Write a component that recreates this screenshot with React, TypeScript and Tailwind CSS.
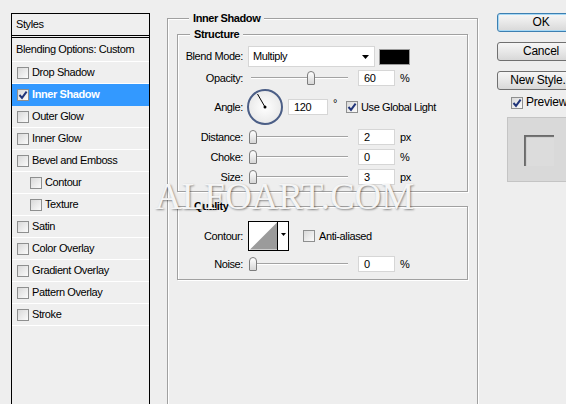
import React from "react";

type StyleRow = { label: string; checked?: boolean; active?: boolean; sub?: boolean };

const styleRows: StyleRow[] = [
  { label: "Drop Shadow" },
  { label: "Inner Shadow", checked: true, active: true },
  { label: "Outer Glow" },
  { label: "Inner Glow" },
  { label: "Bevel and Emboss" },
  { label: "Contour", sub: true },
  { label: "Texture", sub: true },
  { label: "Satin" },
  { label: "Color Overlay" },
  { label: "Gradient Overlay" },
  { label: "Pattern Overlay" },
  { label: "Stroke" },
];

const Checkbox = ({ checked }: { checked?: boolean }) => (
  <span className="flex h-[12px] w-[12px] shrink-0 items-center justify-center border border-[#8e8f8f] bg-linear-to-br from-[#d9d9d9] to-[#fbfbfb]">
    {checked && (
      <svg width="10" height="10" viewBox="0 0 10 10">
        <path d="M1.5 5 L4 7.8 L8.6 1.6" fill="none" stroke="#21357a" strokeWidth="2" />
      </svg>
    )}
  </span>
);

const Slider = ({ pos }: { pos: number }) => (
  <div className="relative h-[16px] w-[102px] shrink-0">
    <div className="absolute left-[3px] right-[2px] top-[7px] h-[2px] border-t border-b border-t-[#a3a3a3] border-b-white" />
    <div
      className="absolute top-[1px] h-[14px] w-[8px] rounded-t-[4px] rounded-b-[1px] border border-[#7d7d7d] bg-linear-to-b from-white to-[#d6d6d6]"
      style={{ left: pos }}
    />
  </div>
);

const Field = ({ value, w = "w-[37px]" }: { value: string; w?: string }) => (
  <div className={`flex h-[16px] ${w} shrink-0 items-center border border-[#d6d6d6] bg-white pl-[5px]`}>
    {value}
  </div>
);

const SliderRow = ({
  label,
  pos,
  value,
  unit,
  h = "h-[20px]",
}: {
  label: string;
  pos: number;
  value: string;
  unit: string;
  h?: string;
}) => (
  <div className={`flex ${h} items-center`}>
    <span className="w-[65px] text-right">{label}</span>
    <div className="ml-[5px]">
      <Slider pos={pos} />
    </div>
    <div className="ml-[8px]">
      <Field value={value} />
    </div>
    <span className="ml-[5px]">{unit}</span>
  </div>
);

const Legend = ({ children }: { children: React.ReactNode }) => (
  <legend className="ml-[12px] bg-[#eeeeee] px-[4px] font-bold leading-[13px]">{children}</legend>
);

const Button = ({ children, primary }: { children: React.ReactNode; primary?: boolean }) => (
  <div
    className={`flex h-[19px] w-[88px] items-center justify-center rounded-[3px] border bg-linear-to-b from-[#f6f6f6] via-[#e8e8e8] to-[#d8d8d8] text-[12px] tracking-[-0.2px] ${
      primary ? "border-[#3c7fb1] shadow-[inset_0_0_0_1px_#a6d8f5]" : "border-[#707070]"
    }`}
  >
    {children}
  </div>
);

export default function App() {
  return (
    <div className="relative flex h-[404px] w-[566px] overflow-hidden bg-[#eeeeee] font-['Liberation_Sans',Arial,sans-serif] text-[11px] leading-[13px] tracking-[-0.4px] text-black">
      {/* styles list */}
      <div className="ml-[11px] mt-[13px] flex h-[392px] w-[139px] shrink-0 flex-col border border-black bg-[#efefef]">
        <div className="flex h-[24px] items-center border-b-[3px] border-double border-black pl-[4px]">Styles</div>
        <div className="flex h-[24px] items-center border-b border-white pl-[4px]">Blending Options: Custom</div>
        {styleRows.map((r) => (
          <div
            key={r.label}
            className={`flex h-[22px] items-center border-b pl-[5px] ${
              r.active ? "border-[#3399ff] bg-[#3399ff] font-bold text-white" : "border-white"
            }`}
          >
            <span className={`flex items-center gap-[3px] ${r.sub ? "pl-[13px]" : ""}`}>
              <Checkbox checked={r.checked} />
              {r.label}
            </span>
          </div>
        ))}
      </div>

      {/* main group */}
      <fieldset className="ml-[17px] mt-[12px] h-[400px] w-[311px] shrink-0 border border-[#a0a0a0] px-[9px] shadow-[inset_1px_1px_0_#ffffff,1px_1px_0_#ffffff]">
        <Legend>Inner Shadow</Legend>

        <fieldset className="mt-[3px] border border-[#a0a0a0] pb-[4px] shadow-[inset_1px_1px_0_#ffffff,1px_1px_0_#ffffff]">
          <Legend>Structure</Legend>

          <div className="mt-[5px] flex h-[21px] items-center">
            <span className="w-[65px] text-right">Blend Mode:</span>
            <div className="ml-[5px] flex h-[21px] w-[127px] items-center justify-between border border-[#d6d6d6] bg-white pl-[4px] pr-[5px]">
              <span>Multiply</span>
              <svg width="7" height="4" viewBox="0 0 7 4">
                <path d="M0 0 H7 L3.5 4 Z" fill="#000" />
              </svg>
            </div>
            <div className="ml-[4px] h-[16px] w-[31px] border border-[#9a9a9a] bg-black" />
          </div>

          <div className="mt-[3px]">
            <SliderRow label="Opacity:" pos={59} value="60" unit="%" h="h-[16px]" />
          </div>

          <div className="mt-[3px] flex h-[36px] items-center">
            <span className="w-[65px] text-right">Angle:</span>
            <div className="ml-[4px] h-[36px] w-[36px] shrink-0 rounded-full border-2 border-[#4b5e86] bg-radial from-white to-[#e2e2e2]">
              <svg width="32" height="32" viewBox="0 0 32 32">
                <line x1="16" y1="16" x2="8.5" y2="3" stroke="#000" strokeWidth="1" />
                <circle cx="16" cy="16" r="1.5" fill="#000" />
              </svg>
            </div>
            <div className="ml-[5px]">
              <Field value="120" w="w-[40px]" />
            </div>
            <span className="ml-[5px] self-start pt-[8px]">°</span>
            <span className="ml-[9px] flex items-center gap-[3px]">
              <Checkbox checked />
              Use Global Light
            </span>
          </div>

          <div className="mt-[2px]">
            <SliderRow label="Distance:" pos={1} value="2" unit="px" />
            <SliderRow label="Choke:" pos={1} value="0" unit="%" />
            <SliderRow label="Size:" pos={1} value="3" unit="px" />
          </div>
        </fieldset>

        <fieldset className="mt-[8px] border border-[#a0a0a0] pb-[7px] shadow-[inset_1px_1px_0_#ffffff,1px_1px_0_#ffffff]">
          <Legend>Quality</Legend>

          <div className="mt-[8px] flex h-[30px] items-center">
            <span className="w-[65px] text-right">Contour:</span>
            <div className="ml-[5px] flex h-[30px] w-[41px] border border-black bg-white">
              <svg width="29" height="28" viewBox="0 0 29 28" className="border-r border-black">
                <polygon points="1,28 29,0 29,28" fill="#9b9b9b" />
              </svg>
              <div className="flex flex-1 items-start justify-center pt-[11px]">
                <svg width="5" height="3" viewBox="0 0 5 3">
                  <path d="M0 0 H5 L2.5 3 Z" fill="#000" />
                </svg>
              </div>
            </div>
            <span className="ml-[14px] flex items-center gap-[4px]">
              <Checkbox />
              Anti-aliased
            </span>
          </div>

          <div className="mt-[5px]">
            <SliderRow label="Noise:" pos={1} value="0" unit="%" h="h-[16px]" />
          </div>
        </fieldset>
      </fieldset>

      {/* buttons */}
      <div className="ml-[19px] mt-[13px] flex w-[90px] shrink-0 flex-col">
        <Button primary>OK</Button>
        <div className="mt-[10px]">
          <Button>Cancel</Button>
        </div>
        <div className="mt-[10px]">
          <Button>New Style...</Button>
        </div>
        <div className="ml-[14px] mt-[6px] flex h-[13px] items-center gap-[3px] text-[12px] tracking-[-0.2px]">
          <Checkbox checked />
          Preview
        </div>
        <div className="ml-[10px] mt-[8px] h-[65px] w-[80px] border border-[#c4c4c4] bg-[#d9d9d9] pl-[16px] pt-[17px]">
          <div className="h-[31px] w-[30px] bg-[#dcdcdc] shadow-[inset_2px_2px_1px_#6b6b6b]" />
        </div>
      </div>

      {/* watermark */}
      <div className="pointer-events-none absolute left-[155px] top-[178px] font-['Liberation_Serif',serif] text-[37px] leading-[37px] tracking-[0px] text-[#f5f5f5] [text-shadow:1px_1px_2px_rgba(0,0,0,0.45)]">
        ALFOART.COM
      </div>
    </div>
  );
}
